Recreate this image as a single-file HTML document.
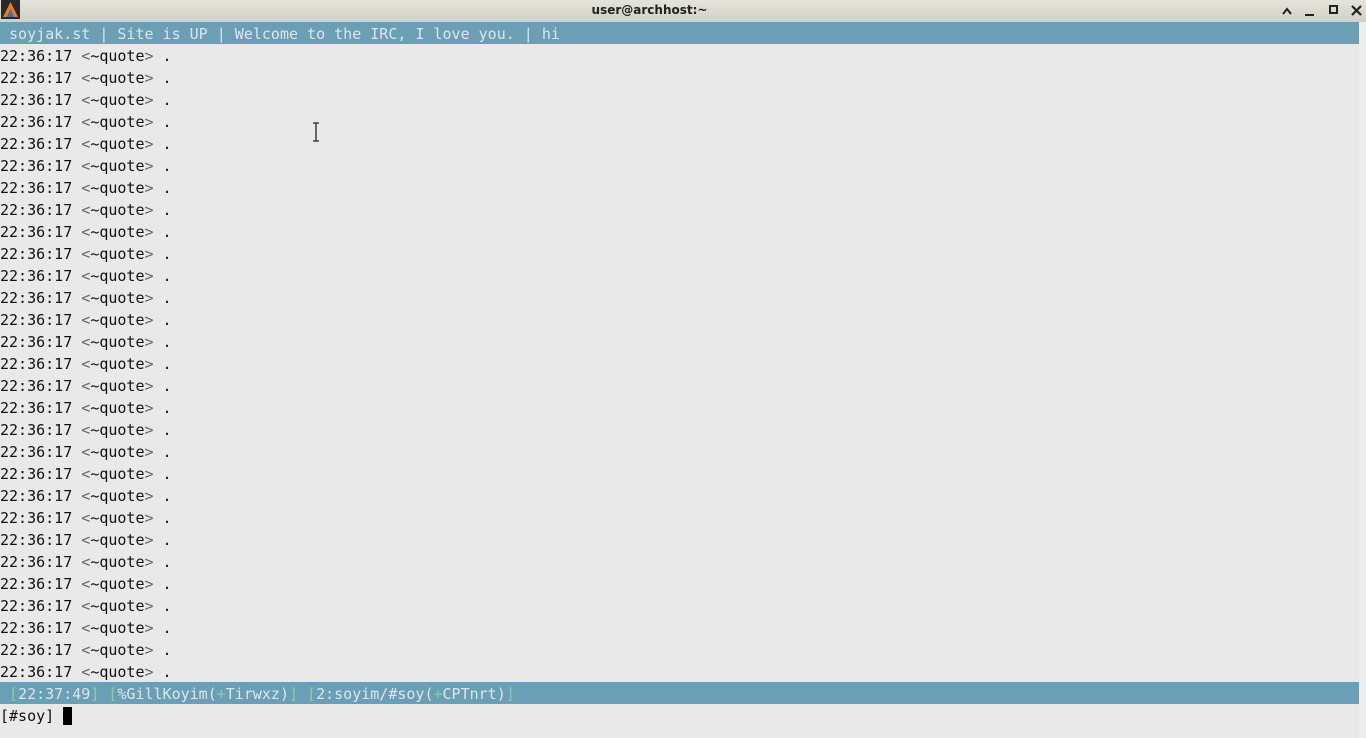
<!DOCTYPE html>
<html><head><meta charset="utf-8"><style>
html,body{margin:0;padding:0;width:1366px;height:738px;overflow:hidden;background:#e9e9e9;}
body{position:relative;font-family:"DejaVu Sans Mono","Liberation Mono",monospace;font-size:15px;color:#111;}
#title{position:absolute;left:0;top:0;width:1366px;height:22px;background:linear-gradient(#e4e4dc,#d0d0c6);}
#title .t{position:absolute;left:0;width:1299px;text-align:center;top:3px;font-family:"DejaVu Sans","Liberation Sans",sans-serif;font-size:12px;font-weight:bold;color:#222;}
#logo{position:absolute;left:1px;top:0;width:19px;height:19px;background:#2a2a2a;}
.bar{position:absolute;left:0;width:1359px;height:22px;background:#6a9fb5;line-height:24px;white-space:pre;color:#dce6ea;}
.ln{position:absolute;left:0;height:22px;line-height:24px;white-space:pre;}
.g{color:#666;}
.b{color:#8fc9a8;}
#rs{position:absolute;left:1359px;top:22px;width:7px;height:716px;background:#ededed;}
</style></head><body>
<div id="title"><div id="logo"><svg width="19" height="19"><polygon points="9.5,2 17,17 13,17 9.5,9 6,17 2,17" fill="#f07a1a"/><polygon points="9.5,9 13,17 6,17" fill="#3a6fc0"/></svg></div>
<div class="t">user@archhost:~</div>
<svg style="position:absolute;left:1280px;top:4px" width="86" height="14">
<path d="M3 10 L7 5 L11 10" stroke="#222" stroke-width="2" fill="none"/>
<rect x="25" y="10" width="9" height="2" fill="#222"/>
<rect x="50" y="2" width="7" height="7" stroke="#222" stroke-width="2" fill="none"/>
<path d="M72 2 L81 11 M81 2 L72 11" stroke="#222" stroke-width="2.2"/>
</svg></div>
<div class="bar" style="top:22px"> soyjak.st | Site is UP | Welcome to the IRC, I love you. | hi</div>
<div id="lines"></div>
<div class="bar" style="top:682px"> <span class="b">[</span>22:37:49<span class="b">]</span> <span class="b">[</span>%GillKoyim(<span class="b">+</span>Tirwxz)<span class="b">]</span> <span class="b">[</span>2:soyim/#soy(<span class="b">+</span>CPTnrt)<span class="b">]</span></div>
<div class="ln" style="top:704px">[#soy] <span style="background:#000">&nbsp;</span></div>
<div id="rs"></div>
<svg style="position:absolute;left:311px;top:122px" width="10" height="20"><path d="M2 1 H8 M5 1 V19 M2 19 H8" stroke="#222" stroke-width="1.3"/></svg>
<script>
var h='';for(var i=0;i<29;i++){h+='<div class="ln" style="top:'+(44+i*22)+'px">22:36:17 <span class="g">&lt;</span>~quote<span class="g">&gt;</span> .</div>';}
document.getElementById('lines').innerHTML=h;
</script>
</body></html>
